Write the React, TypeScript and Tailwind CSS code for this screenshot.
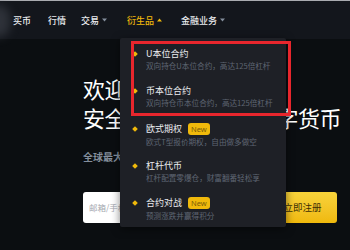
import React from "react";

const CJK = "font-['Noto_Sans_CJK_SC','Noto_Sans',sans-serif]";

function Caret({ up = false, yellow = false }: { up?: boolean; yellow?: boolean }) {
  return (
    <svg width="5" height="4" viewBox="0 0 5 4" className="ml-[3px]">
      {up ? (
        <path d="M0 3.5 L2.5 0.5 L5 3.5 Z" fill={yellow ? "#f0b90b" : "#848e9c"} />
      ) : (
        <path d="M0 0.5 L5 0.5 L2.5 3.5 Z" fill="#848e9c" />
      )}
    </svg>
  );
}

const items = [
  { title: "U本位合约", sub: "双向持仓U本位合约，高达125倍杠杆", isNew: false },
  { title: "币本位合约", sub: "双向持仓币本位合约，高达125倍杠杆", isNew: false },
  { title: "欧式期权", sub: "欧式T型报价期权，自由做多做空", isNew: true },
  { title: "杠杆代币", sub: "杠杆配置零爆仓，财富翻番轻松享", isNew: false },
  { title: "合约对战", sub: "预测涨跌并赢得积分", isNew: true },
];

export default function App() {
  return (
    <div className={`relative w-[350px] h-[250px] overflow-hidden bg-[#0b0e11] ${CJK}`}>
      <div className="h-[1px] bg-[#a9abb0]" />
      <nav className="relative h-[38px] bg-[#13161c] flex items-center text-[9px] font-medium text-[#eaecef] leading-none">
        <div className="absolute left-[-14px] top-[4px] w-[24px] h-[32px] rounded-full bg-[#3a3e46] blur-[5px] opacity-70" />
        <span className="ml-[13px] relative">买币</span>
        <span className="ml-[17px]">行情</span>
        <span className="ml-[15px] flex items-center">交易<Caret /></span>
        <span className="ml-[20px] flex items-center text-[#f0b90b]">衍生品<Caret up yellow /></span>
        <span className="ml-[19px] flex items-center">金融业务<Caret /></span>
      </nav>

      <section className="pl-[83px] pt-[35px]">
        <div className="text-[22px] leading-[29px] tracking-[-0.5px] text-white whitespace-nowrap">
          <div>欢迎来到币安交易所</div>
          <div>安全可信赖的全球数字货币</div>
        </div>
        <div className="mt-[18px] text-[10px] leading-[14px] font-bold text-[#848e9c] whitespace-nowrap">
          全球最大的加密货币交易平台
        </div>
        <div className="mt-[28px] flex h-[31px] w-[254px]">
          <div className="flex-1 bg-white rounded-l-[3px] flex items-center pl-[6px] text-[8.5px] text-[#a5a9b0]">
            邮箱/手机号
          </div>
          <div className="w-[69px] rounded-r-[3px] bg-gradient-to-b from-[#f8d33a] to-[#f0b90b] flex items-center justify-center text-[9.5px] text-[#3c2f05]">
            立即注册
          </div>
        </div>
      </section>

      <div className="absolute left-[120px] top-[38px] w-[166px] h-[189px] bg-[#1e2026] rounded-[2px] shadow-[0_2px_8px_rgba(0,0,0,0.5)] pt-[10px]">
        {items.map((it) => (
          <div key={it.title} className="h-[37.25px] flex">
            <div className="w-[26px] flex justify-center pt-[4px] pl-[4px]">
              <div className="w-[4px] h-[4px] rotate-45 bg-[#f0b90b]" />
            </div>
            <div className="flex flex-col">
              <div className="flex items-center h-[12px]">
                <span className="text-[9px] leading-[12px] text-[#eaecef]">{it.title}</span>
                {it.isNew && (
                  <span className="ml-[6px] h-[12px] px-[3px] rounded-[3px] bg-[#f0b90b] text-[#7a5c08] text-[7.5px] leading-[12px] font-['Noto_Sans',sans-serif]">
                    New
                  </span>
                )}
              </div>
              <div className={`${it.isNew ? "mt-[1px]" : "mt-0"} text-[7.6px] leading-[11px] text-[#5e6673] whitespace-nowrap`}>
                {it.sub}
              </div>
            </div>
          </div>
        ))}
      </div>

      <div className="absolute left-[131px] top-[41px] w-[160px] h-[75px] border-[3px] border-[#e8262d]" />
    </div>
  );
}
